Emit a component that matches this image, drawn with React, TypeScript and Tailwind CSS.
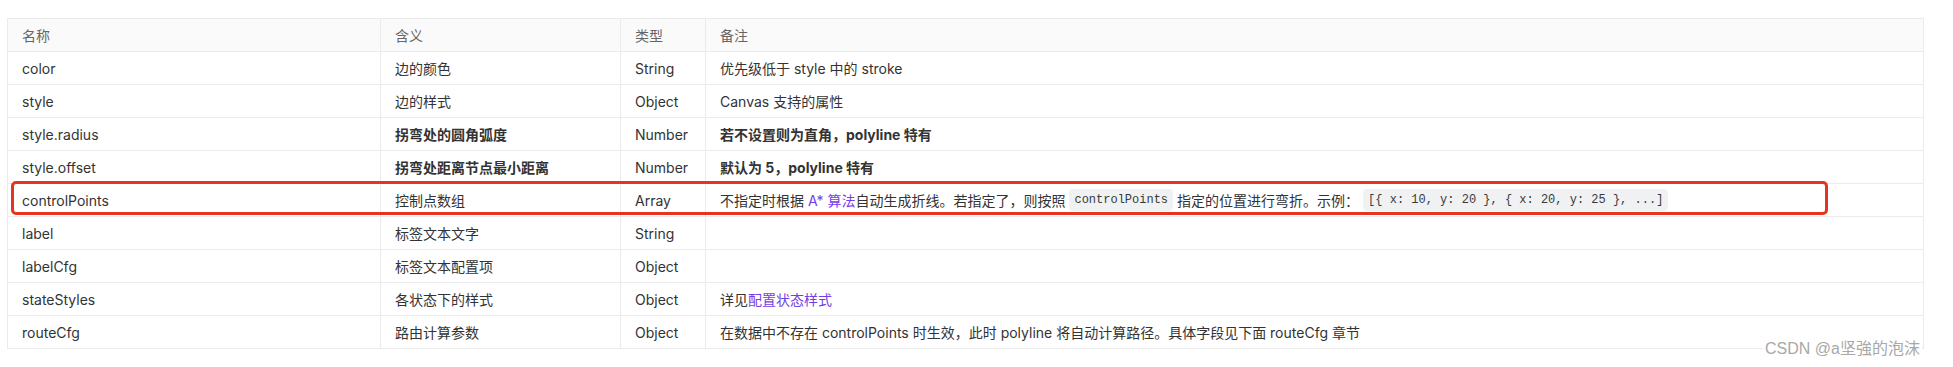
import React from "react";

type Row = {
  name: string;
  meaning: string;
  type: string;
  note: React.ReactNode;
  bold?: boolean;
};

const Code = ({ children }: { children: React.ReactNode }) => (
  <code className="mx-[4px] rounded-[4px] bg-[#eff1f3] px-[5px] py-[2px] font-['Liberation_Mono',monospace] text-[12px] text-[#3a3a3a]">
    {children}
  </code>
);

const rows: Row[] = [
  { name: "color", meaning: "边的颜色", type: "String", note: "优先级低于 style 中的 stroke" },
  { name: "style", meaning: "边的样式", type: "Object", note: "Canvas 支持的属性" },
  {
    name: "style.radius",
    meaning: "拐弯处的圆角弧度",
    type: "Number",
    note: "若不设置则为直角，polyline 特有",
    bold: true,
  },
  {
    name: "style.offset",
    meaning: "拐弯处距离节点最小距离",
    type: "Number",
    note: "默认为 5，polyline 特有",
    bold: true,
  },
  {
    name: "controlPoints",
    meaning: "控制点数组",
    type: "Array",
    note: (
      <>
        不指定时根据 <span className="text-[#7340e8]">A* 算法</span>自动生成折线。若指定了，则按照
        <Code>controlPoints</Code>指定的位置进行弯折。示例：
        <Code>{"[{ x: 10, y: 20 }, { x: 20, y: 25 }, ...]"}</Code>
      </>
    ),
  },
  { name: "label", meaning: "标签文本文字", type: "String", note: "" },
  { name: "labelCfg", meaning: "标签文本配置项", type: "Object", note: "" },
  {
    name: "stateStyles",
    meaning: "各状态下的样式",
    type: "Object",
    note: (
      <>
        详见<span className="text-[#7340e8]">配置状态样式</span>
      </>
    ),
  },
  {
    name: "routeCfg",
    meaning: "路由计算参数",
    type: "Object",
    note: "在数据中不存在 controlPoints 时生效，此时 polyline 将自动计算路径。具体字段见下面 routeCfg 章节",
  },
];

const gridCols = "grid grid-cols-[373px_240px_85px_1fr]";

export default function App() {
  return (
    <div className="relative h-[367px] w-[1953px] overflow-hidden bg-white pl-[7px] pt-[18px] font-['Inter','Noto_Sans_CJK_SC',sans-serif] text-[14px] text-[#333]">
      <div className="relative w-[1917px] border-x border-[#ebebeb]">
        <div className={`${gridCols} h-[34px] border-y border-[#ebebeb] bg-[#fafafa] text-[#666]`}>
          {["名称", "含义", "类型", "备注"].map((h, i) => (
            <div
              key={h}
              className={`flex items-center px-[14px] ${i < 3 ? "border-r border-[#ebebeb]" : ""}`}
            >
              {h}
            </div>
          ))}
        </div>
        {rows.map((r) => (
          <div key={r.name} className={`${gridCols} h-[33px] border-b border-[#ebebeb]`}>
            <div className="flex items-center border-r border-[#ebebeb] px-[14px]">{r.name}</div>
            <div
              className={`flex items-center border-r border-[#ebebeb] px-[14px] ${r.bold ? "font-bold" : ""}`}
            >
              {r.meaning}
            </div>
            <div className="flex items-center border-r border-[#ebebeb] px-[14px]">{r.type}</div>
            <div className={`flex items-center whitespace-pre px-[14px] ${r.bold ? "font-bold" : ""}`}>
              {r.note}
            </div>
          </div>
        ))}
        <div className="pointer-events-none absolute left-[3px] top-[163px] h-[34px] w-[1817px] rounded-[5px] border-[3px] border-[#e5351f]" />
      </div>
      <div className="absolute right-[31px] top-[337px] bg-white px-[2px] font-['Liberation_Sans','Noto_Sans_CJK_SC',sans-serif] text-[16px] leading-[24px] text-[#a8a8a8]">
        CSDN @a坚強的泡沫
      </div>
    </div>
  );
}
